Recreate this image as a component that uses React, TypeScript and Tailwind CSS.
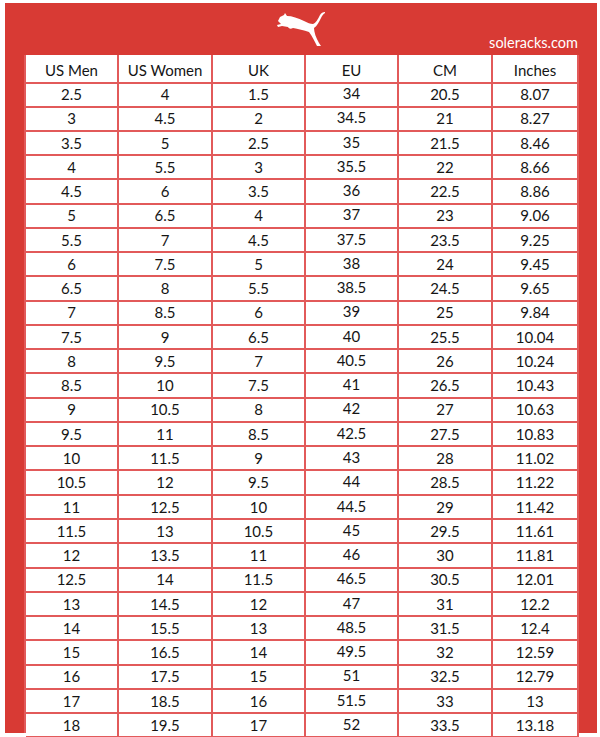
import React from 'react';

type Row = [string, string, string, string, string, string];

const headers = ['US Men', 'US Women', 'UK', 'EU', 'CM', 'Inches'];

const rows: Row[] = [
  ['2.5', '4', '1.5', '34', '20.5', '8.07'],
  ['3', '4.5', '2', '34.5', '21', '8.27'],
  ['3.5', '5', '2.5', '35', '21.5', '8.46'],
  ['4', '5.5', '3', '35.5', '22', '8.66'],
  ['4.5', '6', '3.5', '36', '22.5', '8.86'],
  ['5', '6.5', '4', '37', '23', '9.06'],
  ['5.5', '7', '4.5', '37.5', '23.5', '9.25'],
  ['6', '7.5', '5', '38', '24', '9.45'],
  ['6.5', '8', '5.5', '38.5', '24.5', '9.65'],
  ['7', '8.5', '6', '39', '25', '9.84'],
  ['7.5', '9', '6.5', '40', '25.5', '10.04'],
  ['8', '9.5', '7', '40.5', '26', '10.24'],
  ['8.5', '10', '7.5', '41', '26.5', '10.43'],
  ['9', '10.5', '8', '42', '27', '10.63'],
  ['9.5', '11', '8.5', '42.5', '27.5', '10.83'],
  ['10', '11.5', '9', '43', '28', '11.02'],
  ['10.5', '12', '9.5', '44', '28.5', '11.22'],
  ['11', '12.5', '10', '44.5', '29', '11.42'],
  ['11.5', '13', '10.5', '45', '29.5', '11.61'],
  ['12', '13.5', '11', '46', '30', '11.81'],
  ['12.5', '14', '11.5', '46.5', '30.5', '12.01'],
  ['13', '14.5', '12', '47', '31', '12.2'],
  ['14', '15.5', '13', '48.5', '31.5', '12.4'],
  ['15', '16.5', '14', '49.5', '32', '12.59'],
  ['16', '17.5', '15', '51', '32.5', '12.79'],
  ['17', '18.5', '16', '51.5', '33', '13'],
  ['18', '19.5', '17', '52', '33.5', '13.18'],
];

const PumaCat = () => (
  <svg width="50" height="36" viewBox="0 0 50 36" fill="white" xmlns="http://www.w3.org/2000/svg">
    <path d="M2 9 L4 5 L8 3 L9 1 L11 4 C16 4 22 6 28 9 C32 11 34 12 37 12 C40 11 42 7 44 3 C45 1 47 0 49 0 L49 1 C47 2 46 4 45 6 C43 10 41 14 38 16 C38 20 40 26 43 31 L45 34 L41 34 C39 30 36 24 33 20 C28 18 22 17 17 16 C15 17 13 17 12 15 L6 14 L2 15 L1 13 L5 12 L4 11 Z" />
  </svg>
);

export default function App() {
  return (
    <div className="w-[600px] h-[737px] bg-white pt-[3px] pl-[5px]" style={{ fontFamily: 'Lato, "Open Sans", sans-serif' }}>
      <div className="w-[592px] bg-[#d83a34]">
        {/* header: logo + site name */}
        <div className="grid grid-cols-3 h-[52px] px-[19px]">
          <div />
          <div className="flex justify-center pt-[9px]">
            <PumaCat />
          </div>
          <div className="flex items-end justify-end pb-[1px] text-white text-[14.5px]">soleracks.com</div>
        </div>

        <div className="ml-[19px] w-[553px] bg-white border-l-2 border-[#e25a5a] text-[15px] text-[#151515]">
          <div className="grid grid-cols-[93px_94px_93px_93px_94px_86px] h-[23px]">
            {headers.map((h) => (
              <div key={h} className="flex items-center justify-center pt-[4px] border-r-2 border-b-2 border-[#e25a5a]">
                {h}
              </div>
            ))}
          </div>
          {rows.map((r, i) => (
            <div key={i} className="grid grid-cols-[93px_94px_93px_93px_94px_86px] h-[24.27px]">
              {r.map((v, j) => (
                <div
                  key={j}
                  className={`flex items-center justify-center border-r-2 border-b-2 border-[#e25a5a] ${j === 3 ? 'pt-[3px]' : 'pt-[5px]'}`}
                >
                  {v}
                </div>
              ))}
            </div>
          ))}
        </div>
      </div>
    </div>
  );
}
